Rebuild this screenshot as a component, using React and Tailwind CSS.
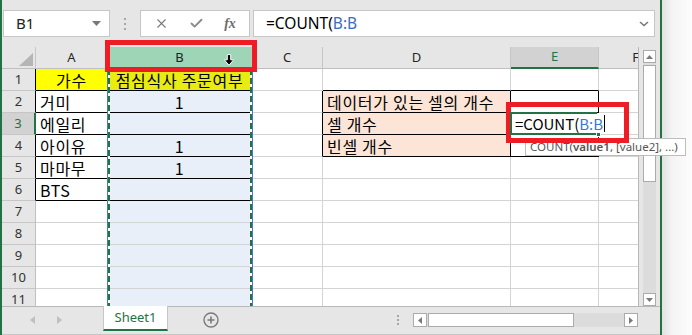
import { X, Check } from 'lucide-react'

const COLS = [
  { k: 'A', w: 'w-[72px]' },
  { k: 'B', w: 'w-[144px]' },
  { k: 'C', w: 'w-[71px]' },
  { k: 'D', w: 'w-[188px]' },
  { k: 'E', w: 'w-[88px]' },
  { k: 'F', w: 'w-[74px]' },
]

const ROWS = [
  { n: 1, A: '가수', B: '점심식사 주문여부' },
  { n: 2, A: '거미', B: '1', D: '데이터가 있는 셀의 개수' },
  { n: 3, A: '에일리', D: '셀 개수' },
  { n: 4, A: '아이유', B: '1', D: '빈셀 개수' },
  { n: 5, A: '마마무', B: '1' },
  { n: 6, A: 'BTS' },
  { n: 7 }, { n: 8 }, { n: 9 }, { n: 10 }, { n: 11 },
]

const cellFont = { fontFamily: '"Noto Sans CJK KR", "Noto Sans", sans-serif' }

function cellClass(n, k) {
  const editing = n === 3 && k === 'E'
  const inTable = (k === 'A' || k === 'B') && n <= 6
  const inRight = (k === 'D' || k === 'E') && n >= 2 && n <= 4
  const rBlack = inTable || inRight || (k === 'C' && n >= 2 && n <= 4)
  const bBlack = inTable || inRight || ((k === 'D' || k === 'E') && n === 1)
  let bg = 'bg-white'
  if (k === 'A' && n === 1) bg = 'bg-[#ffff00]'
  else if (k === 'B' && n === 1) bg = 'bg-[#e9ec12]'
  else if (k === 'B') bg = 'bg-[#e8eff8]'
  else if (k === 'D' && n >= 2 && n <= 4) bg = 'bg-[#fce4d6]'
  const align = (k === 'B' || (k === 'A' && n === 1)) ? 'justify-center' : 'justify-start pl-[4px]'
  return [
    'h-[22px] shrink-0 flex items-center border-r border-b relative',
    editing ? 'border-r-white' : rBlack ? 'border-r-black' : 'border-r-[#d4d4d4]',
    bBlack ? 'border-b-black' : 'border-b-[#d4d4d4]',
    editing ? 'tracking-normal text-[15px] z-10' : 'tracking-[0.7px] text-[16px]',
    bg, align,
  ].join(' ')
}

function ColHead({ k, w }) {
  if (k === 'B') return (
    <div className={`${w} h-[22px] shrink-0 flex items-center justify-center bg-[#9fd5b7] border-r border-r-[#c6c6c6] border-b border-b-[#bfbfbf] text-[13px] text-[#222] relative`}>
      B
      <svg className="absolute left-[115px] top-[7px]" width="12" height="12" viewBox="0 0 12 12">
        <path d="M4.3 0.6h3.4v5.2h3L6 11.2 1.3 5.8h3z" fill="#000" stroke="#fff" strokeWidth="1" />
      </svg>
    </div>
  )
  if (k === 'E') return (
    <div className={`${w} h-[22px] shrink-0 flex items-center justify-center bg-[#d2d2d2] border-r border-r-[#c6c6c6] border-b-2 border-b-[#217346] text-[13px] text-[#217346]`}>E</div>
  )
  return (
    <div className={`${w} h-[22px] shrink-0 flex items-center justify-center bg-[#e6e6e6] border-r border-r-[#c6c6c6] border-b border-b-[#bfbfbf] text-[13px] text-[#262626]`}>{k}</div>
  )
}

function RowHead({ n }) {
  if (n === 3) return (
    <div className="w-[34px] h-[22px] shrink-0 flex items-center justify-center bg-[#d2d2d2] border-r-2 border-r-[#217346] border-b border-b-[#c6c6c6] text-[13px] text-[#217346]">3</div>
  )
  return (
    <div className={`w-[34px] h-[22px] shrink-0 flex items-center justify-center bg-[#e6e6e6] border-r border-b border-b-[#c6c6c6] text-[13px] text-[#333] ${n <= 6 ? 'border-r-black' : 'border-r-[#bfbfbf]'}`}>{n}</div>
  )
}

function EditCell() {
  return (
    <>
      <span className="shrink-0 whitespace-nowrap">
        <span className="text-black">=COUNT(</span>
        <span className="text-[#3b78d8]">B:B</span>
      </span>
      <span className="shrink-0 inline-block w-[1px] h-[17px] bg-black ml-[1px]" />
      <div className="absolute -left-[1px] -top-[1px] w-[87px] h-[23px] border-y-2 border-l-2 border-[#217346] pointer-events-none" />
      <div className="absolute -right-[3px] -bottom-[3px] w-[5px] h-[5px] bg-[#217346] border border-white" />
    </>
  )
}

export default function App() {
  const ui = { fontFamily: '"Noto Sans", "Open Sans", sans-serif' }
  return (
    <div className="w-[692px] h-[335px] flex overflow-hidden relative bg-white" style={ui}>
      <div className="w-[662px] h-full shrink-0 flex flex-col bg-[#e6e6e6] border-l-2 border-r-2 border-[#217346]">
        {/* formula bar */}
        <div className="h-[47px] shrink-0 flex items-start pt-[10px]">
          <div className="ml-[1px] w-[107px] h-[27px] bg-white border border-[#c6c6c6] flex items-center justify-between pl-[12px] pr-[8px] text-[15px] text-[#222]">
            B1
            <svg width="9" height="5" viewBox="0 0 9 5"><path d="M0 0h9L4.5 5z" fill="#777" /></svg>
          </div>
          <div className="w-[30px] h-[27px] flex flex-col items-center justify-center gap-[3px]">
            <span className="w-[2px] h-[2px] bg-[#a6a6a6]" />
            <span className="w-[2px] h-[2px] bg-[#a6a6a6]" />
            <span className="w-[2px] h-[2px] bg-[#a6a6a6]" />
          </div>
          <div className="w-[110px] h-[27px] bg-white border border-[#c6c6c6] flex items-center">
            <div className="w-[38px] flex justify-center pl-[2px]"><X size={15} strokeWidth={1.8} color="#7a7a7a" /></div>
            <div className="w-[34px] flex justify-center"><Check size={15} strokeWidth={3} color="#8a8a8a" /></div>
            <div className="w-[34px] flex justify-center text-[14px] italic font-bold text-[#6d6d6d]" style={{ fontFamily: '"Liberation Serif", serif' }}>fx</div>
          </div>
          <div className="ml-[3px] w-[402px] h-[27px] bg-white border border-[#c6c6c6] flex items-center justify-between pl-[12px] pr-[5px] text-[15.5px]">
            <span><span className="text-black">=COUNT(</span><span className="text-[#3a6cc0]">B:B</span></span>
            <svg width="10" height="6" viewBox="0 0 10 6"><path d="M1 1l4 3.5L9 1" fill="none" stroke="#777" strokeWidth="1.6" /></svg>
          </div>
        </div>

        {/* grid + vertical scrollbar */}
        <div className="flex h-[259px] shrink-0">
          <div className="w-[637px] shrink-0 overflow-hidden border-r border-r-[#b8b8b8] bg-white">
            <div className="flex w-[700px]">
              <div className="w-[34px] h-[22px] shrink-0 bg-[#e6e6e6] border-r border-r-[#c6c6c6] border-b border-b-[#bfbfbf] relative">
                <svg className="absolute left-[17px] top-[6px]" width="14" height="13" viewBox="0 0 14 13"><path d="M14 0v13H0z" fill="#b5b5b5" /></svg>
              </div>
              {COLS.map(c => <ColHead key={c.k} {...c} />)}
            </div>
            <div className="relative h-[237px] overflow-hidden w-[700px]">
              {ROWS.map(r => (
                <div key={r.n} className="flex">
                  <RowHead n={r.n} />
                  {COLS.map(c => (
                    <div key={c.k} className={`${c.w} ${cellClass(r.n, c.k)} text-black leading-none whitespace-nowrap`} style={cellFont}>
                      {r.n === 3 && c.k === 'E' ? <EditCell /> : r[c.k]}
                    </div>
                  ))}
                </div>
              ))}
              {/* marching ants around column B */}
              <div className="absolute left-[105px] top-0 w-[1px] h-full bg-[#4a78c8]" />
              <div className="absolute left-[106px] top-0 w-[2px] h-full bg-[repeating-linear-gradient(to_bottom,#217346_0_6px,#ffffff_6px_9px)]" />
              <div className="absolute left-[248px] top-0 w-[2px] h-full bg-[repeating-linear-gradient(to_bottom,#217346_0_6px,#ffffff_6px_9px)]" />
              <div className="absolute left-[250px] top-0 w-[1px] h-full bg-[#4a78c8]" />
            </div>
          </div>
          <div className="flex-1 pl-[4px] pt-[3px] flex flex-col">
            <div className="w-[13px] flex-1 flex flex-col bg-[#dcdcdc]">
              <div className="h-[13px] bg-white border border-[#ababab] flex items-center justify-center">
                <svg width="7" height="4" viewBox="0 0 7 4"><path d="M0 4h7L3.5 0z" fill="#7a7a7a" /></svg>
              </div>
              <div className="mt-[2px] h-[117px] bg-white border border-[#ababab]" />
              <div className="flex-1" />
              <div className="h-[13px] bg-white border border-[#ababab] flex items-center justify-center">
                <svg width="7" height="4" viewBox="0 0 7 4"><path d="M0 0h7L3.5 4z" fill="#7a7a7a" /></svg>
              </div>
            </div>
          </div>
        </div>

        {/* sheet tabs */}
        <div className="flex-1 flex items-start border-t border-t-[#b8b8b8] border-b border-b-[#c6c6c6]">
          <div className="w-[101px] h-[26px] flex items-center pl-[28px] gap-[22px]">
            <svg width="5" height="8" viewBox="0 0 5 8"><path d="M5 0v8L0 4z" fill="#c0c0c0" /></svg>
            <svg width="5" height="8" viewBox="0 0 5 8"><path d="M0 0v8l5-4z" fill="#c0c0c0" /></svg>
          </div>
          <div className="-mt-[1px] w-[65px] h-[25px] bg-white border-x border-x-[#c6c6c6] border-b-2 border-b-[#217346] flex items-center justify-center text-[13px] text-[#217346]">Sheet1</div>
          <div className="ml-[35px] h-[26px] flex items-center">
            <svg width="16" height="16" viewBox="0 0 16 16">
              <circle cx="8" cy="8" r="7" fill="none" stroke="#7a7a7a" strokeWidth="1.4" />
              <path d="M8 4.5v7M4.5 8h7" stroke="#7a7a7a" strokeWidth="1.6" />
            </svg>
          </div>
          <div className="ml-[178px] h-[26px] flex flex-col items-center justify-center gap-[2px]">
            <span className="w-[2px] h-[2px] bg-[#a6a6a6]" />
            <span className="w-[2px] h-[2px] bg-[#a6a6a6]" />
            <span className="w-[2px] h-[2px] bg-[#a6a6a6]" />
          </div>
          <div className="ml-[14px] mt-[6px] w-[225px] h-[14px] flex bg-[#dcdcdc]">
            <div className="w-[14px] h-full bg-white border border-[#ababab] flex items-center justify-center">
              <svg width="4" height="7" viewBox="0 0 4 7"><path d="M4 0v7L0 3.5z" fill="#7a7a7a" /></svg>
            </div>
            <div className="ml-[1px] w-[146px] h-full bg-white border border-[#ababab]" />
            <div className="flex-1" />
            <div className="w-[14px] h-full bg-white border border-[#ababab] flex items-center justify-center">
              <svg width="4" height="7" viewBox="0 0 4 7"><path d="M0 0v7l4-3.5z" fill="#7a7a7a" /></svg>
            </div>
          </div>
        </div>
      </div>
      <div className="flex-1 h-full bg-[linear-gradient(to_right,#e2e2e2,#f4f4f4_35%,#fdfdfd)]" />

      {/* function tooltip */}
      <div className="absolute left-[525px] top-[138px] w-[161px] h-[18px] bg-white border border-[#bdbdbd] flex items-center pl-[4px] text-[11.5px] text-[#555] whitespace-nowrap">
        COUNT(<b className="font-semibold">value1</b>, [value2], ...)
      </div>

      {/* red highlight boxes */}
      <div className="absolute left-[105px] top-[40px] w-[152px] h-[32px] border-[5px] border-[#ee1c25]" />
      <div className="absolute left-[506px] top-[102px] w-[123px] h-[41px] border-[5px] border-[#ee1c25]" />
    </div>
  )
}
